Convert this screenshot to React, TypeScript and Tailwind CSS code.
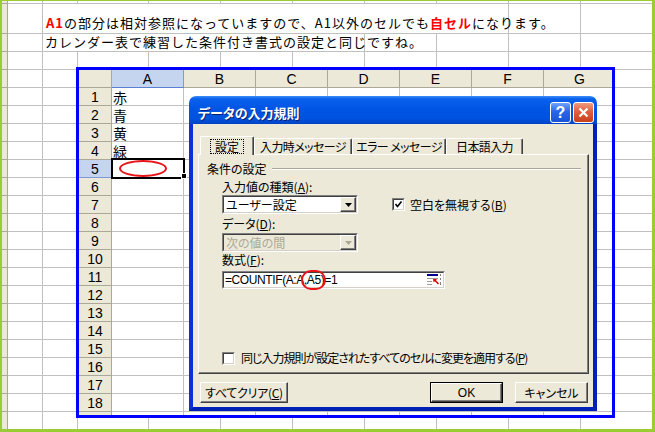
import React from "react";

const jp = "font-['Noto_Sans_CJK_JP','Noto_Sans',sans-serif]";
const ui = "font-['Noto_Sans_CJK_JP','Noto_Sans',sans-serif] [font-feature-settings:'palt']";

const GRID = "border-r border-b border-[#c0c0c0]";

function OuterGrid() {
  const rows = Array.from({ length: 24 }, (_, r) => r);
  const cell = (r: number, c: number) =>
    c === 0 ? (
      <div key={`${r}-${c}`} className="bg-[#ece9d8] border-r border-b border-[#aca899]" />
    ) : (
      <div key={`${r}-${c}`} className={GRID} />
    );

  return (
    <div className="grid grid-cols-[6px_35px_35px_71px_repeat(7,72px)] grid-rows-[3px_30px_repeat(22,18px)]">
      {rows.map((r) => {
        if (r === 1) {
          return (
            <React.Fragment key={r}>
              {cell(r, 0)}
              {cell(r, 1)}
              <div
                className={`col-span-7 ${GRID} flex items-end pl-[3px] pb-[2px] whitespace-nowrap text-[13px] leading-[16px] tracking-[1px] text-black ${jp}`}
              >
                <span className="font-bold text-[#ff0000]">A1</span>
                の部分は相対参照になっていますので、A1以外のセルでも
                <span className="font-bold text-[#ff0000]">自セル</span>
                になります。
              </div>
              {cell(r, 9)}
              {cell(r, 10)}
            </React.Fragment>
          );
        }
        if (r === 2) {
          return (
            <React.Fragment key={r}>
              {cell(r, 0)}
              {cell(r, 1)}
              <div
                className={`col-span-5 ${GRID} flex items-end pl-[2px] pb-[1px] whitespace-nowrap text-[13px] leading-[16px] tracking-[1px] text-black ${jp}`}
              >
                カレンダー表で練習した条件付き書式の設定と同じですね。
              </div>
              {[7, 8, 9, 10].map((c) => cell(r, c))}
            </React.Fragment>
          );
        }
        return (
          <React.Fragment key={r}>
            {Array.from({ length: 11 }, (_, c) => cell(r, c))}
          </React.Fragment>
        );
      })}
    </div>
  );
}

const COLS = ["A", "B", "C", "D", "E", "F", "G"];
const VALUES = ["赤", "青", "黄", "緑"];

function InnerSheet() {
  const rows = Array.from({ length: 19 }, (_, i) => i + 1);
  return (
    <div className="absolute left-[74px] top-[66px] w-[539px] h-[351px] border-[3px] border-[#0000ff] bg-white overflow-hidden">
      <div className="grid grid-cols-[33px_repeat(7,72px)] grid-rows-[18px_repeat(19,18px)] text-[14px] leading-[16px] text-black font-['Liberation_Sans',sans-serif]">
        {/* header row */}
        <div className="bg-[#ece9d8] border-r border-b border-[#aca899]" />
        {COLS.map((c) => (
          <div
            key={c}
            className={`flex items-center justify-center border-r border-b ${
              c === "A"
                ? "bg-[#c5d5f0] border-r-[#7b9ad6] border-b-[#5a7ed0]"
                : "bg-[#ece9d8] border-[#aca899]"
            }`}
          >
            {c}
          </div>
        ))}

        {rows.map((r) => (
          <React.Fragment key={r}>
            <div
              className={`flex items-center justify-center border-r border-b ${
                r === 5
                  ? "bg-[#c5d5f0] border-r-[#5a7ed0] border-b-[#7b9ad6]"
                  : "bg-[#ece9d8] border-[#aca899]"
              }`}
            >
              {r <= 18 ? r : null}
            </div>
            {COLS.map((c, i) => (
              <div key={c} className={`${GRID} flex items-center pl-[1px] ${jp}`}>
                {i === 0 && r <= 4 ? (
                  <span className="text-[14px] leading-[14px]">{VALUES[r - 1]}</span>
                ) : null}
              </div>
            ))}
          </React.Fragment>
        ))}
      </div>

      {/* active cell A5 */}
      <div className="absolute left-[32px] top-[88px] w-[74px] h-[21px] border-2 border-black" />
      <div className="absolute left-[102px] top-[103px] w-[6px] h-[6px] bg-black border border-white" />
      <div className="absolute left-[40px] top-[90px] w-[48px] h-[17px] rounded-[50%] border-2 border-[#e8141a]" />
    </div>
  );
}

function Sunken({
  className = "",
  inner = "bg-white",
  children,
}: {
  className?: string;
  inner?: string;
  children?: React.ReactNode;
}) {
  return (
    <div
      className={`border border-t-[#808080] border-l-[#808080] border-b-white border-r-white ${className}`}
    >
      <div
        className={`h-full w-full flex items-center border border-t-[#404040] border-l-[#404040] border-b-[#d4d0c8] border-r-[#d4d0c8] ${inner}`}
      >
        {children}
      </div>
    </div>
  );
}

function DropButton({ disabled }: { disabled?: boolean }) {
  return (
    <div className="ml-auto h-full w-[16px] flex items-center justify-center bg-[#ece9d8] border border-t-white border-l-white border-b-[#404040] border-r-[#404040] shadow-[inset_-1px_-1px_0_#808080]">
      <svg width="7" height="4" viewBox="0 0 7 4">
        <path d="M0 0h7L3.5 4z" fill={disabled ? "#aca899" : "#000"} />
      </svg>
    </div>
  );
}

function Check({ checked }: { checked?: boolean }) {
  return (
    <Sunken className="w-[13px] h-[13px] shrink-0">
      {checked && (
        <svg width="9" height="9" viewBox="0 0 9 9" className="mx-auto">
          <path d="M1.5 4 L3.5 6.5 L7.5 1.5" stroke="#000" strokeWidth="1.6" fill="none" />
        </svg>
      )}
    </Sunken>
  );
}

function Btn({
  className = "",
  children,
  isDefault,
}: {
  className?: string;
  children: React.ReactNode;
  isDefault?: boolean;
}) {
  const face = (
    <div className="h-full w-full flex items-center justify-center bg-[#ece9d8] border border-t-white border-l-white border-b-[#404040] border-r-[#404040] shadow-[inset_-1px_-1px_0_#808080]">
      {children}
    </div>
  );
  return isDefault ? (
    <div className={`border border-black ${className}`}>{face}</div>
  ) : (
    <div className={className}>{face}</div>
  );
}

function RangeIcon() {
  return (
    <svg width="16" height="14" viewBox="0 0 16 14">
      <rect x="1" y="1" width="11" height="2" fill="#000088" />
      <rect x="1" y="5" width="11" height="1" fill="#9a9a9a" />
      <rect x="1" y="8" width="5" height="1" fill="#9a9a9a" />
      <rect x="1" y="11" width="5" height="1" fill="#9a9a9a" />
      <rect x="14" y="1" width="1" height="2" fill="#808080" />
      <rect x="14" y="5" width="1" height="2" fill="#808080" />
      <rect x="14" y="9" width="1" height="3" fill="#808080" />
      <path d="M7 6 L11 6 L10 7.2 L13 10.5 L12 11.5 L8.8 8.2 L7.6 9.4 Z" fill="#e00000" />
    </svg>
  );
}

function Tab({ label, w, active }: { label: React.ReactNode; w: string; active?: boolean }) {
  return active ? (
    <div
      className={`relative z-10 -mb-px ${w} h-[19px] bg-[#ece9d8] border-l border-t border-white border-r border-r-[#404040] rounded-t-[2px] shadow-[inset_-1px_0_0_#808080] flex items-center justify-center`}
    >
      <span className="border border-dotted border-black px-[4px] leading-[13px]">{label}</span>
    </div>
  ) : (
    <div
      className={`${w} h-[16px] bg-[#ece9d8] border-l border-t border-white border-r border-r-[#404040] rounded-t-[2px] shadow-[inset_-1px_0_0_#808080] flex items-center justify-center leading-[14px] tracking-[-0.6px] whitespace-nowrap`}
    >
      {label}
    </div>
  );
}

function Dialog() {
  return (
    <div
      className={`absolute left-[187px] top-[95px] w-[408px] h-[315px] flex flex-col rounded-t-[7px] overflow-hidden text-[12px] text-black ${ui}`}
    >
      {/* title bar */}
      <div className="h-[28px] shrink-0 flex items-start bg-[linear-gradient(to_bottom,#3d8ef9_0%,#0b61ec_10%,#0055e5_45%,#0052df_80%,#0043c4_100%)]">
        <div className="pl-[9px] pt-[9px] text-[13px] leading-[15px] font-bold text-white [text-shadow:1px_1px_0_#0a1f73]">
          データの入力規則
        </div>
        <div className="ml-auto flex gap-[2px] pt-[6px] pr-[3px]">
          <div className="w-[21px] h-[21px] rounded-[3px] border border-white bg-[linear-gradient(to_bottom,#6fa2fb,#2a66ea_45%,#1a53d6)] flex items-center justify-center text-white font-bold text-[16px] leading-none font-['Liberation_Sans',sans-serif]">
            ?
          </div>
          <div className="w-[21px] h-[21px] rounded-[3px] border border-white bg-[linear-gradient(to_bottom,#ec9a7e,#e0603f_45%,#c8401c)] flex items-center justify-center">
            <svg width="11" height="11" viewBox="0 0 11 11">
              <path d="M1.5 1.5 L9.5 9.5 M9.5 1.5 L1.5 9.5" stroke="#fff" strokeWidth="2.2" />
            </svg>
          </div>
        </div>
      </div>

      {/* body */}
      <div className="flex-1 flex flex-col bg-[#ece9d8] border-l-4 border-r-4 border-b-4 border-l-[#0831d9] border-r-[#0021b8] border-b-[#0021b8] pl-[5px] pr-[4px] pt-[11px]">
        {/* tabs */}
        <div className="flex items-end ml-[2px] h-[19px]">
          <Tab label="設定" w="w-[54px]" active />
          <Tab label="入力時メッセージ" w="w-[98px]" />
          <Tab label="エラー メッセージ" w="w-[94px]" />
          <Tab label="日本語入力" w="w-[77px]" />
        </div>

        {/* panel */}
        <div className="h-[220px] flex flex-col border border-t-white border-l-white border-r-[#404040] border-b-[#404040] shadow-[inset_-1px_-1px_0_#808080]">
          <div className="mt-[7px] h-[14px] flex items-center">
            <span className="ml-[8px] leading-[14px]">条件の設定</span>
            <div className="flex-1 ml-[5px] mr-[7px] h-[2px] border-t border-b border-t-[#aca899] border-b-white" />
          </div>

          <div className="mt-[4px] ml-[23px] leading-[14px]">
            入力値の種類(<span className="underline underline-offset-1">A</span>):
          </div>

          <div className="mt-[1px] flex items-center">
            <Sunken className="ml-[23px] w-[136px] h-[19px]">
              <span className="pl-[2px] leading-[14px]">ユーザー設定</span>
              <DropButton />
            </Sunken>
            <div className="ml-[34px] flex items-center">
              <Check checked />
              <span className="ml-[5px] leading-[14px]">
                空白を無視する(<span className="underline underline-offset-1">B</span>)
              </span>
            </div>
          </div>

          <div className="mt-[3px] ml-[23px] leading-[14px]">
            データ(<span className="underline underline-offset-1">D</span>):
          </div>

          <Sunken className="mt-[2px] ml-[23px] w-[136px] h-[19px]" inner="bg-[#ece9d8]">
            <span className="pl-[2px] leading-[14px] text-[#aca899]">次の値の間</span>
            <DropButton disabled />
          </Sunken>

          <div className="mt-[1px] ml-[23px] leading-[14px]">
            数式(<span className="underline underline-offset-1">F</span>):
          </div>

          <Sunken className="mt-[4px] ml-[23px] w-[223px] h-[18px]">
            <span className="pl-[1px] text-[12px] leading-[14px] tracking-[-0.4px] font-['Liberation_Sans',sans-serif]">
              =COUNTIF(A:A
              <span className="relative inline-block">
                ,A5)
                <span className="absolute -left-[3px] -right-[2px] -top-[3px] -bottom-[3px] rounded-full border-2 border-[#e8141a]" />
              </span>
              =1
            </span>
            <span className="ml-auto mr-[1px] flex items-center">
              <RangeIcon />
            </span>
          </Sunken>

          <div className="mt-[62px] ml-[23px] flex items-center">
            <Check />
            <span className="ml-[6px] leading-[14px] tracking-[-1px] whitespace-nowrap">
              同じ入力規則が設定されたすべてのセルに変更を適用する(
              <span className="underline underline-offset-1">P</span>)
            </span>
          </div>
        </div>

        {/* buttons */}
        <div className="mt-[8px] flex">
          <Btn className="ml-[2px] w-[88px] h-[21px]">
            <span className="tracking-[-0.3px]">
              すべてクリア(<span className="underline underline-offset-1">C</span>)
            </span>
          </Btn>
          <Btn className="ml-auto w-[73px] h-[21px]" isDefault>
            <span className="font-['Liberation_Sans',sans-serif]">OK</span>
          </Btn>
          <Btn className="ml-[12px] mr-[1px] w-[73px] h-[21px]">キャンセル</Btn>
        </div>
      </div>
    </div>
  );
}

export default function App() {
  return (
    <div className="relative w-[655px] h-[432px] overflow-hidden bg-white border-t border-l-2 border-r-[3px] border-b-[3px] border-[#9acd32]">
      <OuterGrid />
      <InnerSheet />
      <Dialog />
    </div>
  );
}
